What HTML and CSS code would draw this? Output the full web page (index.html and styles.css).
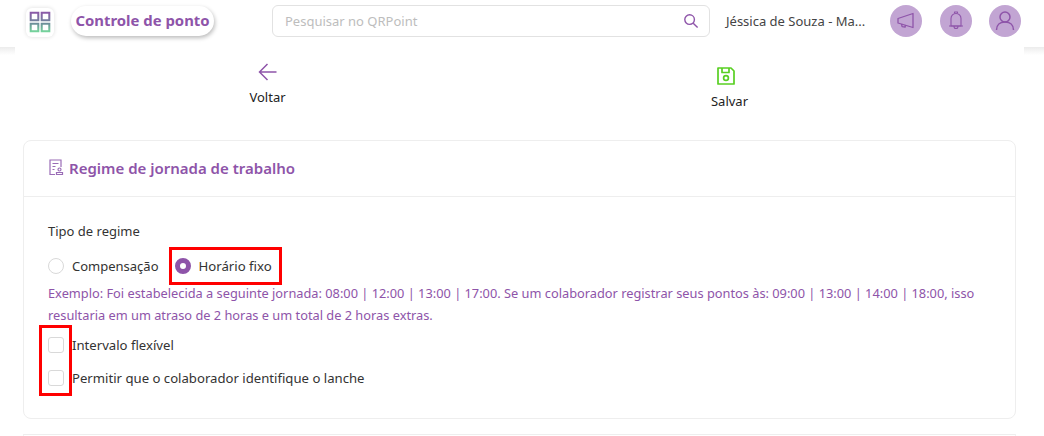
FILE: index.html
```html
<!DOCTYPE html>
<html lang="pt-BR">
<head>
<meta charset="UTF-8">
<title>Controle de ponto</title>
<link rel="stylesheet" href="styles.css">
</head>
<body>
<header class="topo">
  <div class="logo">
    <svg width="22" height="22" viewBox="0 0 26 26" fill="none" stroke-width="2.400">
      <defs><linearGradient id="grad" x1="0" y1="0" x2="0" y2="1"><stop offset="0" stop-color="#8b5aa8"/><stop offset=".55" stop-color="#6d8a9a"/><stop offset="1" stop-color="#74d29b"/></linearGradient></defs>
      <path stroke="url(#grad)" d="M2 2h9v9H2zM15 2h9v9h-9zM2 15h9v9H2zM15 15h9v9h-9z"/>
    </svg>
  </div>
  <div class="modulo">Controle de ponto</div>
  <div class="busca">
    <span>Pesquisar no QRPoint</span>
    <svg width="16" height="16" viewBox="0 0 16 16" fill="none" stroke="#8e54a9" stroke-width="1.400"><circle cx="6.600" cy="6.600" r="4.800"/><path d="M10.200 10.200l4.400 4.400"/></svg>
  </div>
  <div class="usuario">Jéssica de Souza - Ma...</div>
  <div class="acoes">
    <div class="circulo">
      <svg width="20" height="20" viewBox="0 0 20 20" fill="none" stroke="#8e54a9" stroke-width="1.300" stroke-linejoin="round"><path d="M17 2.500v14L2 12V7.500z"/><path d="M5.500 13l.6 2.600 3 .4.4-2"/></svg>
    </div>
    <div class="circulo">
      <svg width="20" height="22" viewBox="0 0 20 22" fill="none" stroke="#8e54a9" stroke-width="1.100" stroke-linejoin="round"><path d="M5 16V8.500a5 5 0 0 1 10 0V16z"/><path d="M3 16h14M8.500 3.500V2h3v1.500M8 16.500a2 2 0 0 0 4 0"/></svg>
    </div>
    <div class="circulo">
      <svg width="20" height="22" viewBox="0 0 20 22" fill="none" stroke="#8e54a9" stroke-width="1.500"><circle cx="10" cy="7" r="5"/><path d="M1.500 20c0-5 3.500-8 8.500-8s8.500 3 8.500 8"/></svg>
    </div>
  </div>
</header>

<main class="conteudo">
  <div class="barra">
    <button class="botao voltar">
      <svg width="22" height="22" viewBox="0 0 22 22" fill="none" stroke="#8e54a9" stroke-width="1.500"><path d="M19.500 11H2.500M10.500 3l-8 8 8 8"/></svg>
      <span>Voltar</span>
    </button>
    <button class="botao salvar">
      <svg class="icone-salvar" width="20" height="20" viewBox="0 0 20 20" fill="none" stroke="#58cf22" stroke-width="1.700" stroke-linejoin="round"><path d="M2 2h13l3 3v13H2z"/><path d="M6 2v4.500h7V2"/><circle cx="10" cy="12" r="2.400"/></svg>
      <span>Salvar</span>
    </button>
  </div>

  <section class="cartao">
    <h2 class="cartao-titulo">
      <svg width="17" height="17" viewBox="0 0 17 17" fill="none" stroke="#9a6cb6" stroke-width="1.200"><path d="M7 15.500H2V1h11v7"/><path d="M4.500 4.500h6M4.500 7.500h3M4.500 10.500h2"/><circle cx="11.500" cy="10.500" r="1.500"/><path d="M8.500 15.500v-2h6v2z"/></svg>
      Regime de jornada de trabalho
    </h2>
    <div class="cartao-corpo">
      <div class="rotulo">Tipo de regime</div>
      <div class="radios">
        <label class="opcao"><span class="radio"></span>Compensação</label>
        <label class="opcao fixo"><span class="radio marcado"></span>Horário fixo</label>
      </div>
      <p class="exemplo">Exemplo: Foi estabelecida a seguinte jornada: 08:00 | 12:00 | 13:00 | 17:00. Se um colaborador registrar seus pontos às: 09:00 | 13:00 | 14:00 | 18:00, isso resultaria em um atraso de 2 horas e um total de 2 horas extras.</p>
      <label class="check"><span class="caixa"></span>Intervalo flexível</label>
      <label class="check"><span class="caixa"></span>Permitir que o colaborador identifique o lanche</label>
    </div>
  </section>
  <section class="cartao proximo"></section>
</main>

<div class="destaque d-horario"></div>
<div class="destaque d-checks"></div>
</body>
</html>
```

FILE: styles.css
```css
* { box-sizing: border-box; }
body { margin: 0; height: 436px; overflow: hidden; background: #fff; color: #333;
  font-family: "Noto Sans", "Open Sans", Arial, sans-serif; font-size: 13px; position: relative; }

/* topo */
.topo { height: 47px; display: flex; align-items: center; background: #fff; padding-left: 26px; }
.logo { width: 28px; height: 29px; margin-top: -3px; border-radius: 6px; background: #fff; box-shadow: 0 0 4px #ddd;
  display: flex; align-items: center; justify-content: center; }
.modulo { margin-left: 17px; margin-top: -5px; width: 143px; height: 30px; border-radius: 16px; background: #fff;
  box-shadow: 1px 2px 4px #bbb; color: #8e54a9; font-weight: 700; font-size: 14.9px; line-height: 29px; text-align: center; white-space: nowrap; }
.busca { margin-left: 58px; margin-top: -5px; width: 438px; height: 32px; border: 1px solid #e2e2e2; border-radius: 6px;
  display: flex; align-items: center; justify-content: space-between; padding: 0 10px 0 12px; color: #bdbdbd; font-size: 13px; }
.usuario { margin-left: 16px; margin-top: -5px; width: 164px; font-size: 13px; color: #444; white-space: nowrap; }
.acoes { display: flex; gap: 18px; margin-top: -5px; }
.circulo { width: 32px; height: 32px; border-radius: 50%; background: #c2a5d3; display: flex; align-items: center; justify-content: center; }
.circulo:last-child { margin-left: -1px; }

/* conteudo */
body::before { content: ""; position: absolute; left: 0; right: 0; top: 47px; height: 8px;
  background: linear-gradient(#ececec, #fff); }
.conteudo { margin: 0 20px 0 15px; background: #fff; padding: 0 8px; position: relative; }
.barra { height: 93px; display: grid; grid-template-columns: 489px 1fr; }
.botao { border: 0; background: none; padding: 0; font: inherit; color: #222; display: flex; flex-direction: column; align-items: center; }
.voltar { padding-top: 14px; width: 489px; gap: 5px; }
.salvar { padding-top: 19px; width: 435px; gap: 6px; }
.icone-salvar { margin-right: 8px; }

.cartao { border: 1px solid #eeeeee; border-radius: 8px; background: #fff; height: 279px; }
.cartao-titulo { margin: 0; height: 56px; border-bottom: 1px solid #eeeeee; padding: 0 0 2px 24px; display: flex; align-items: center; gap: 4px;
  color: #8e54a9; font-size: 15px; font-weight: 600; }
.cartao-corpo { padding: 24px 24px 0; }
.rotulo { line-height: 20px; }
.radios { display: flex; gap: 16px; margin-top: 15px; height: 20px; }
.opcao { display: flex; align-items: center; gap: 8px; }
.fixo { font-size: 13.2px; }
.radio { width: 16px; height: 16px; border-radius: 50%; border: 1px solid #d9d9d9; background: #fff; }
.radio.marcado { border: 5px solid #8e54a9; }
.exemplo { margin: 6px 0 0; color: #8e54a9; font-size: 12.8px; line-height: 22px; }
.check { display: flex; align-items: center; height: 33px; font-size: 13.15px; }
.check:first-of-type { margin-top: 2px; }
.caixa { width: 16px; height: 16px; border: 1px solid #d9d9d9; border-radius: 3px; background: #fff; margin-right: 8px; }
.proximo { margin-top: 15px; height: 2px; border-bottom: 0; }

/* marcacoes vermelhas por cima da tela */
.destaque { position: absolute; border: 3px solid #f00; }
.d-horario { left: 169px; top: 247px; width: 113px; height: 38px; }
.d-checks { left: 39px; top: 325px; width: 33px; height: 71px; }
```
